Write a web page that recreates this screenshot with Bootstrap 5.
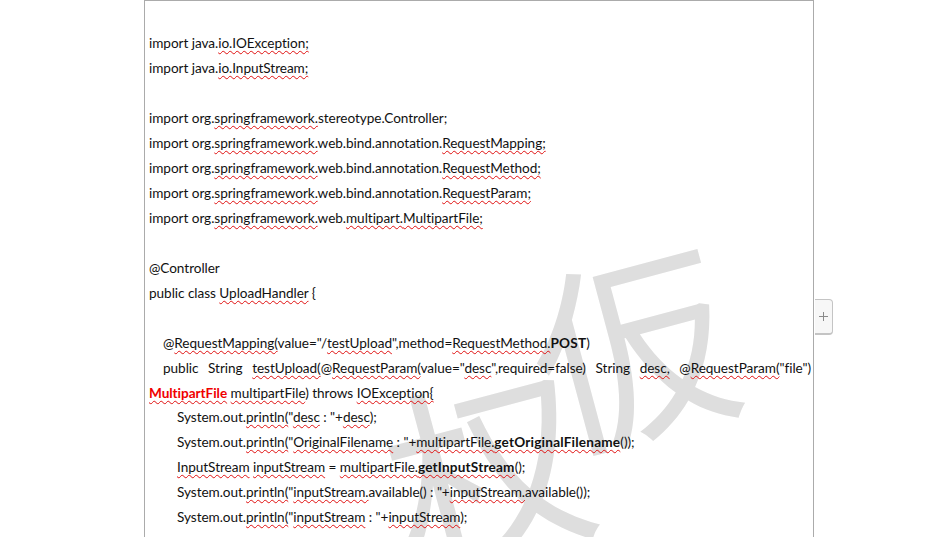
<!DOCTYPE html>
<html lang="en">
<head>
<meta charset="utf-8">
<title>UploadHandler</title>
<link href="https://cdn.jsdelivr.net/npm/bootstrap@5.3.0/dist/css/bootstrap.min.css" rel="stylesheet">
<style>
html,body{height:100%;overflow:hidden;background:#fff}
.doc-shell{height:537px;padding-left:144px;overflow:hidden}
.doc-page{width:670px;height:600px;border:1px solid #ababab;border-bottom:0;padding:30.4px 2px 0 4px;overflow:hidden;position:relative;
  font-family:"Lato","Liberation Sans",sans-serif;font-size:13.6px;letter-spacing:-.05px;color:#111}
.code-line{height:24.95px;line-height:24.95px;white-space:nowrap;position:relative;z-index:1}
.ind1{padding-left:14px}
.ind2{padding-left:28px}
.just{white-space:normal;text-align-last:justify}
.sp{text-decoration:underline wavy #e01010 1px;text-underline-offset:2px;text-decoration-skip-ink:none}
.hot{color:#f00000;font-weight:700}
b{letter-spacing:.2px}
.wm{position:absolute;color:#dedede;font-family:"Noto Sans CJK JP",sans-serif;font-weight:400;font-size:200px;line-height:1;white-space:nowrap;letter-spacing:0;z-index:0;transform:rotate(-15deg);transform-origin:center}
.wm-a{left:385px;top:239px}
.wm-b{left:240px;top:360px}
.side-tab{position:absolute;left:815px;top:299px;width:18px;height:36px;background:#f7f7f7;border:1px solid #c4c4c4;border-left:0;border-bottom-width:2px;border-radius:0 4px 4px 0}
</style>
</head>
<body>
<div class="doc-shell">
<div class="doc-page">
<span class="wm wm-a" aria-hidden="true">仮</span>
<span class="wm wm-b" aria-hidden="true">权</span>
<div class="code-line">import java.<span class="sp">io.</span><span class="sp">IOException;</span></div>
<div class="code-line">import java.<span class="sp">io.</span><span class="sp">InputStream;</span></div>
<div class="code-line">&nbsp;</div>
<div class="code-line">import org.<span class="sp">springframework.</span>stereotype.Controller;</div>
<div class="code-line">import org.<span class="sp">springframework.</span>web.bind.annotation.<span class="sp">RequestMapping;</span></div>
<div class="code-line">import org.<span class="sp">springframework.</span>web.bind.annotation.<span class="sp">RequestMethod;</span></div>
<div class="code-line">import org.<span class="sp">springframework.</span>web.bind.annotation.<span class="sp">RequestParam;</span></div>
<div class="code-line">import org.<span class="sp">springframework.</span>web.<span class="sp">multipart.</span><span class="sp">MultipartFile;</span></div>
<div class="code-line">&nbsp;</div>
<div class="code-line">@Controller</div>
<div class="code-line">public class <span class="sp">UploadHandler</span> {</div>
<div class="code-line">&nbsp;</div>
<div class="code-line ind1">@<span class="sp">RequestMapping(</span>value="/<span class="sp">testUpload</span>",method=<span class="sp">RequestMethod.</span><b>POST</b>)</div>
<div class="code-line ind1 just">public String <span class="sp">testUpload(</span>@<span class="sp">RequestParam(</span>value="<span class="sp">desc</span>",required=false) String <span class="sp">desc,</span> @<span class="sp">RequestParam(</span>"file")</div>
<div class="code-line"><span class="sp hot">MultipartFile</span> <span class="sp">multipartFile</span>) throws <span class="sp">IOException{</span></div>
<div class="code-line ind2">System.out.<span class="sp">println(</span>"<span class="sp">desc</span> : "+<span class="sp">desc</span>);</div>
<div class="code-line ind2">System.out.<span class="sp">println(</span>"<span class="sp">OriginalFilename</span> : "+<span class="sp">multipartFile.</span><b class="sp">getOriginalFilename</b>());</div>
<div class="code-line ind2"><span class="sp">InputStream</span> <span class="sp">inputStream</span> = <span class="sp">multipartFile.</span><b class="sp">getInputStream</b>();</div>
<div class="code-line ind2">System.out.<span class="sp">println(</span>"<span class="sp">inputStream.</span>available() : "+<span class="sp">inputStream.</span>available());</div>
<div class="code-line ind2">System.out.<span class="sp">println(</span>"<span class="sp">inputStream</span> : "+<span class="sp">inputStream</span>);</div>
</div>
</div>
<div class="side-tab d-flex align-items-center justify-content-center">
<svg width="9" height="9" viewBox="0 0 9 9" aria-hidden="true"><path d="M4.5 0v9M0 4.5h9" stroke="#8a8a8a" stroke-width="1" fill="none"/></svg>
</div>
</body>
</html>
